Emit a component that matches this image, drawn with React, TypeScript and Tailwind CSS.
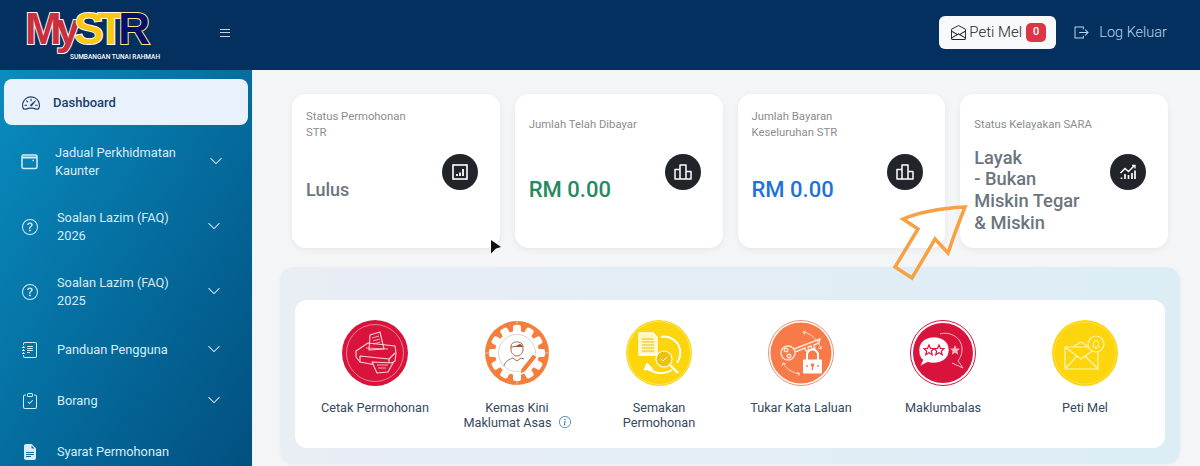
import React from "react";
import {
  BsChevronDown,
  BsClipboardCheck,
  BsEnvelopeOpen,
  BsFileEarmarkTextFill,
  BsInfoCircle,
  BsJournalText,
  BsQuestionCircle,
  BsSpeedometer2,
} from "react-icons/bs";

const CalendarIcon = () => (
  <svg width="17" height="17" viewBox="0 0 17 17" fill="none" stroke="currentColor" strokeWidth="1.5">
    <rect x="1" y="2" width="15" height="13.5" rx="1.5" />
    <path d="M1 4.5h15" strokeWidth="2" />
    <path d="M11.5 7.5h1.5" strokeWidth="1.4" />
  </svg>
);

const AssessmentIcon = () => (
  <svg width="18" height="18" viewBox="0 0 18 18" fill="none" stroke="white">
    <rect x="2" y="2" width="14" height="14" strokeWidth="1.6" />
    <path d="M6 13v-2M9 13V9.5M12 13V6" strokeWidth="1.8" />
  </svg>
);

const BarsIcon = () => (
  <svg width="18" height="16" viewBox="0 0 18 16" fill="none" stroke="white" strokeWidth="1.5" strokeLinejoin="round">
    <path d="M1 5.500h5V15H1zM6 1h6v14H6zM12 7.500h5V15h-5z" />
  </svg>
);

const InsightsIcon = () => (
  <svg width="20" height="20" viewBox="0 0 20 20" fill="none" stroke="white">
    <path d="M2.5 11l4.5-4.5 3.5 3 6-6" strokeWidth="1.5" />
    <path d="M14 3.5h3v3" strokeWidth="1.3" />
    <path d="M3.5 17v-1.5M7 17v-5M10.5 17v-4M14 17v-6M17 17V8.5" strokeWidth="1.7" />
  </svg>
);

const LogoutIcon = () => (
  <svg width="15" height="13" viewBox="0 0 16 14" fill="none" stroke="currentColor" strokeWidth="1.1">
    <path d="M10 3.5V1H1v12h9v-2.5" />
    <path d="M5.5 7H15M12 4l3 3-3 3" />
  </svg>
);

const PrinterArt = () => (
  <svg viewBox="0 0 66 66" className="size-[66px]">
    <circle cx="33" cy="33" r="33" fill="#d8143c" />
    <circle cx="33" cy="33" r="28.5" fill="none" stroke="#f6a9b8" strokeWidth="0.7" />
    <g fill="none" stroke="#fbd3da" strokeWidth="1.1" strokeLinejoin="round">
      <path d="M28 15l10-3 4 17-15 1z" fill="#d8143c" />
      <path d="M30 18l7-2M31 21l7-2M31.500 24l7-2" strokeWidth="0.8" />
      <path d="M14 31l12-8 27 3 1 7-1 8-9 6-26-5-4-5z" />
      <path d="M18 36l29 3 6-6M18 42l0-6M47 39l0 7" />
      <path d="M24 28l22 1" strokeWidth="0.8" />
      <path d="M30 42l21 1-5 9-11 1z" fill="#d8143c" />
      <path d="M35 45l11 0M36 48l8 0" strokeWidth="0.8" />
    </g>
  </svg>
);

const GearArt = () => {
  const teeth = [0, 30, 60, 90, 120, 150, 180, 210, 240, 270, 300, 330];
  return (
    <svg viewBox="0 0 66 66" className="size-[66px]">
      <circle cx="33" cy="33" r="32" fill="#f47f3c" />
      <g fill="#fff">
        {teeth.map((a) => (
          <rect key={a} x="29" y="5" width="8" height="10" rx="2" transform={`rotate(${a} 33 33)`} />
        ))}
        <circle cx="33" cy="33" r="22" />
      </g>
      <path d="M1 33h64M33 1v5M33 60v5" stroke="#fff" strokeWidth="0.5" />
      <circle cx="33" cy="33" r="18.500" fill="#fff" stroke="#c9b6a8" strokeWidth="0.6" />
      <g fill="none" stroke="#9a5a3a" strokeWidth="0.9">
        <path d="M27 26c0-5 11-6 12 0v4c0 3-3 6-6 6s-6-3-6-6z" />
        <path d="M27 27c3 0 7-1 9-3 1 1 2 2 3 3" fill="#9a5a3a" />
        <path d="M20 46c1-5 6-7 9-8l4 3 4-3 3 1" />
      </g>
      <path d="M37 49l12-15 4 3-12 15-5 2z" fill="#f47f3c" stroke="#fff" strokeWidth="1" />
    </svg>
  );
};

const ReviewArt = () => (
  <svg viewBox="0 0 66 66" className="size-[66px]">
    <circle cx="33" cy="33" r="33" fill="#fdd50c" />
    <circle cx="33" cy="33" r="31.500" fill="none" stroke="#fde98a" strokeWidth="0.8" />
    <g fill="none" stroke="#fff">
      <path d="M13 13h14l4 4v18H13z" fill="#fff6c4" strokeWidth="1.3" />
      <path d="M16 19h11M16 22h12M16 25h12M16 28h12M16 31h12" stroke="#e2bd10" strokeWidth="1" />
      <path d="M35 17c8-2 18 4 19 13 1 6-1 10-3 13" strokeWidth="2" />
      <path d="M46 50c-6 4-14 4-20 1-3-1-4-2-5-3" strokeWidth="2" />
      <path d="M18 50l3-7 6 6z" fill="#fff" />
      <circle cx="38" cy="39" r="8" fill="#eec20a" strokeWidth="1.2" />
      <path d="M35 39l2 2 4-4" strokeWidth="1" />
      <path d="M44 45l8 8" strokeWidth="2.4" />
    </g>
  </svg>
);

const KeyArt = () => (
  <svg viewBox="0 0 66 66" className="size-[66px]">
    <circle cx="33" cy="33" r="32.500" fill="#fff" stroke="#e39478" strokeWidth="1" />
    <circle cx="33" cy="33" r="30.500" fill="#f87a48" />
    <g fill="none" stroke="#fde3d8" strokeWidth="1.4">
      <circle cx="20" cy="33" r="7" />
      <circle cx="18" cy="30" r="1.800" />
      <circle cx="21" cy="36" r="1.800" />
      <path d="M26 29l26-10-1 4-5 2 1 3-3 1-1-3-3 1 1 3-3 1-1-3-10 4" />
      <path d="M35 12c8 1 15 8 18 17M35 12l3-1M35 12l2 3M53 29l1-3M53 29l-3-1" strokeWidth="0.9" />
      <path d="M15 43c3 6 10 10 17 11M15 43l-1 3M15 43l3 1M32 54l-3-2M32 54l-2 2" strokeWidth="0.9" />
    </g>
    <path d="M39 40v-5a5.500 5.500 0 0111 0v5" fill="none" stroke="#fff" strokeWidth="2" />
    <rect x="35" y="39.500" width="19" height="14" rx="1" fill="#fff" />
    <circle cx="44.500" cy="45" r="1.800" fill="#f87a48" />
    <rect x="43.800" y="45" width="1.400" height="5" fill="#f87a48" />
    <circle cx="39" cy="46" r="0.900" fill="#f87a48" />
    <circle cx="50" cy="46" r="0.900" fill="#f87a48" />
  </svg>
);

const StarPath = "M0-5l1.500 3.400 3.500.3-2.600 2.400.8 3.600L0 2.800l-3.200 1.900.8-3.600-2.600-2.400 3.500-.3z";

const FeedbackArt = () => (
  <svg viewBox="0 0 66 66" className="size-[66px]">
    <circle cx="33" cy="33" r="32.500" fill="#fff" stroke="#d8143c" strokeWidth="1" />
    <circle cx="33" cy="33" r="30" fill="#d8143c" />
    <path d="M30 14c9-3 22 3 22 15 0 6-2 9-4 12l5 7-11-5" fill="none" stroke="#f6b4c1" strokeWidth="1" />
    <path d={StarPath} transform="translate(45 30)" fill="#f6b4c1" />
    <path d="M9 30c0-8 7-13 15-13s15 5 15 13-7 13-15 13c-2 0-4 0-6-1l-8 4 3-6c-3-2-4-6-4-10z" fill="#fff" stroke="#d8143c" strokeWidth="0.6" />
    <path d={StarPath} transform="translate(19 30)" fill="none" stroke="#d8143c" strokeWidth="1.2" />
    <path d={StarPath} transform="translate(29 30)" fill="none" stroke="#d8143c" strokeWidth="1.2" />
  </svg>
);

const MailArt = () => (
  <svg viewBox="0 0 66 66" className="size-[66px]">
    <circle cx="33" cy="33" r="33" fill="#fdd50c" />
    <circle cx="33" cy="33" r="31" fill="none" stroke="#fde67a" strokeWidth="0.6" />
    <g fill="none" stroke="#fff4b8" strokeWidth="1.2">
      <path d="M13 27h33v22H13z" />
      <path d="M13 27l16 12 17-12M13 49l12-13M46 49L33 36M21 27l8-5 8 5" />
      <circle cx="44" cy="24" r="8" fill="#fdd50c" />
      <path d="M40.500 27c1-1 1-2 1-4a2.500 2.500 0 015 0c0 2 0 3 1 4zM43 28.500h2" strokeWidth="0.9" />
    </g>
  </svg>
);

const navItems = [
  { label: ["Jadual Perkhidmatan", "Kaunter"], icon: <CalendarIcon />, tall: true, first: true },
  { label: ["Soalan Lazim (FAQ)", "2026"], icon: <BsQuestionCircle size={16} />, tall: true },
  { label: ["Soalan Lazim (FAQ)", "2025"], icon: <BsQuestionCircle size={16} />, tall: true },
  { label: ["Panduan Pengguna"], icon: <BsJournalText size={16} />, chevron: true },
  { label: ["Borang"], icon: <BsClipboardCheck size={16} />, chevron: true },
  { label: ["Syarat Permohonan"], icon: <BsFileEarmarkTextFill size={16} /> },
];

const statCards = [
  { label: ["Status Permohonan", "STR"], value: ["Lulus"], tone: "text-[#6c757d] text-[18px] leading-[22px]", icon: <AssessmentIcon /> },
  { label: ["Jumlah Telah Dibayar"], value: ["RM 0.00"], tone: "text-[#268a5f] text-[22px] leading-[26px]", icon: <BarsIcon /> },
  { label: ["Jumlah Bayaran", "Keseluruhan STR"], value: ["RM 0.00"], tone: "text-[#1f72d8] text-[22px] leading-[26px]", icon: <BarsIcon /> },
  { label: ["Status Kelayakan SARA"], value: ["Layak", "- Bukan", "Miskin Tegar", "& Miskin"], tone: "text-[#6c757d] text-[18.300px] leading-[21.6px]", icon: <InsightsIcon /> },
];

const shortcuts = [
  { label: ["Cetak Permohonan"], art: <PrinterArt /> },
  { label: ["Kemas Kini", "Maklumat Asas"], art: <GearArt />, info: true },
  { label: ["Semakan", "Permohonan"], art: <ReviewArt /> },
  { label: ["Tukar Kata Laluan"], art: <KeyArt /> },
  { label: ["Maklumbalas"], art: <FeedbackArt /> },
  { label: ["Peti Mel"], art: <MailArt /> },
];

export default function App() {
  return (
    <div className="relative h-[466px] w-[1200px] overflow-hidden bg-[#f3f5f7] font-['Roboto',sans-serif]">
      <header className="flex h-[70px] items-center bg-[#03305f]">
        <div className="ml-[25px] h-[58px] w-[140px]">
          <div className="flex pt-[5px] font-['Liberation_Sans',sans-serif] text-[44px] leading-[36px] font-bold tracking-[-6px] [paint-order:stroke_fill] [-webkit-text-stroke:2px_white]">
            <span className="text-[#c92f3c]">My</span>
            <span className="text-[#fbc814]">ST</span>
            <span className="text-[#05106b] [-webkit-text-stroke:2px_#fbe88a]">R</span>
          </div>
          <div className="mt-[6px] ml-[45px] text-[6.500px] leading-[8px] font-medium whitespace-nowrap text-white">
            SUMBANGAN TUNAI RAHMAH
          </div>
        </div>
        <div className="mb-[5px] ml-[55px] flex w-[10px] flex-col gap-[2.500px]">
          <span className="h-px bg-[#c5d3df]" />
          <span className="h-px bg-[#c5d3df]" />
          <span className="h-px bg-[#c5d3df]" />
        </div>
        <div className="mb-[5px] ml-auto flex items-center pr-[33px]">
          <button className="flex h-[33px] w-[117px] items-center rounded-[6px] bg-[#f7f9fb] pl-[12px] text-[15px] font-light text-[#212529]">
            <BsEnvelopeOpen size={15} />
            <span className="ml-[3px]">Peti Mel</span>
            <span className="ml-[4px] flex h-[19px] w-[20px] items-center justify-center rounded-[5px] bg-[#dc3545] text-[11px] font-medium text-white">
              0
            </span>
          </button>
          <div className="ml-[18px] flex items-center text-[#b9d4ea]">
            <LogoutIcon />
            <span className="ml-[10px] text-[14.500px] font-light">Log Keluar</span>
          </div>
        </div>
      </header>

      <div className="flex h-[396px]">
        <aside className="w-[252px] shrink-0 bg-linear-to-br from-[#0a8cc0] to-[#02507f] pt-[9px] text-[#d6ecf6]">
          <div className="mx-[4px] flex h-[46px] items-center rounded-[8px] bg-[#e8f1fc] pt-px pl-[18px] text-[#1a3f6b]">
            <BsSpeedometer2 size={18} />
            <span className="ml-[13px] text-[13px] font-medium">Dashboard</span>
          </div>
          <nav className="mt-[4px]">
            {navItems.map((item) => (
              <div
                key={item.label.join(" ")}
                className={`flex items-center pl-[21px] ${item.tall ? "h-[65px]" : "h-[51px]"}`}
              >
                <span className="flex w-[17px] justify-center">{item.icon}</span>
                <div className={`${item.first ? "ml-[17px]" : "ml-[19px]"} w-[146px] text-[12.800px] leading-[18px]`}>
                  {item.label.map((line) => (
                    <div key={line}>{line}</div>
                  ))}
                </div>
                {(item.tall || item.chevron) && (
                  <BsChevronDown size={14} className={`mb-[2px] ${item.first ? "ml-[8px]" : "ml-[4px]"}`} />
                )}
              </div>
            ))}
          </nav>
        </aside>

        <main className="min-w-0 flex-1 border-l border-[#e8f0f6]">
          <div className="grid grid-cols-4 gap-[15px] pt-[24px] pr-[32px] pl-[39px]">
            {statCards.map((card) => (
              <article key={card.label[0]} className="h-[154px] rounded-[14px] bg-white p-[14px] shadow-[0_2px_6px_rgba(0,0,0,0.06)]">
                <div className="mt-px flex h-[32px] flex-col justify-center text-[11.300px] leading-[16px] text-[#8a8d91]">
                  {card.label.map((line) => (
                    <div key={line}>{line}</div>
                  ))}
                </div>
                <div className="mt-[6px] flex justify-between pr-[8px]">
                  <div className={`flex h-[86px] flex-col justify-center font-medium ${card.tone}`}>
                    {card.value.map((line) => (
                      <div key={line}>{line}</div>
                    ))}
                  </div>
                  <div className="mt-[7px] flex size-[36px] items-center justify-center rounded-full bg-[#212529]">
                    {card.icon}
                  </div>
                </div>
              </article>
            ))}
          </div>

          <section className="mt-[19px] mr-[20px] ml-[27px] h-[197px] rounded-[14px] bg-linear-to-r from-[#e9edf4] to-[#dcedf6] px-[15px] pt-[33px] shadow-[0_1px_4px_rgba(0,0,0,0.04)]">
            <div className="grid h-[148px] grid-cols-6 rounded-[12px] bg-white px-[9px] pt-[20px]">
              {shortcuts.map((item) => (
                <div key={item.label[0]} className="flex flex-col items-center text-center">
                  {item.art}
                  <div className="mt-[14px] text-[12.700px] leading-[15px] text-[#34495e]">
                    {item.label.map((line, i) => (
                      <div key={line}>
                        {line}
                        {item.info && i === 1 && <BsInfoCircle size={12} className="ml-[7px] inline-block align-[-1px] text-[#2f7fb0]" />}
                      </div>
                    ))}
                  </div>
                </div>
              ))}
            </div>
          </section>
        </main>
      </div>

      {/* hand drawn arrow and cursor sit over the cards */}
      <svg className="absolute top-[200px] left-[890px]" width="85" height="85" viewBox="890 200 85 85" fill="none">
        <path
          d="M965 207C945 208 920 212 903 219L918 229L895 267L912 278L935 239L948 253C953 238 959 222 965 207Z"
          stroke="#f7a143"
          strokeWidth="3.500"
          strokeLinejoin="miter"
        />
      </svg>
      <svg className="absolute top-[239px] left-[489px]" width="14" height="17" viewBox="0 0 14 17">
        <path d="M2 1l10 7-5 1.500-5 5z" fill="#111" />
      </svg>
    </div>
  );
}
